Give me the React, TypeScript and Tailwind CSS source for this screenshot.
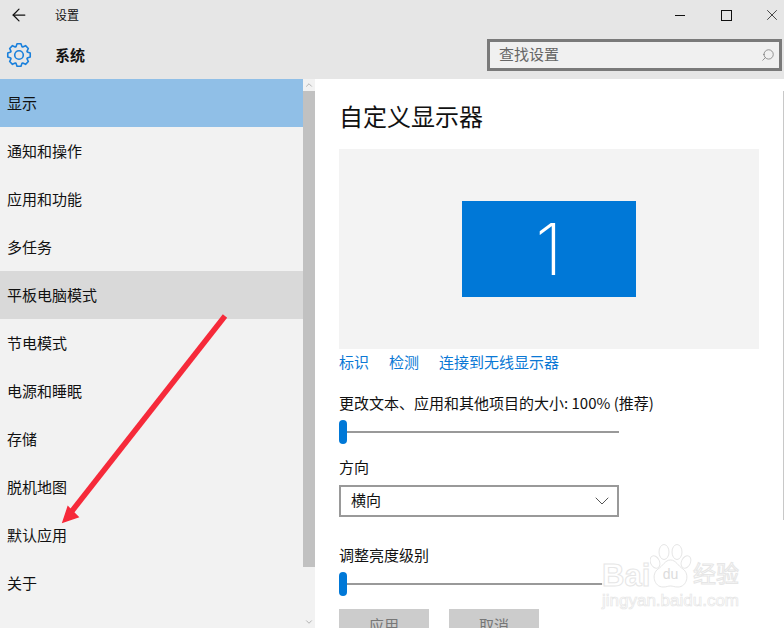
import { ArrowLeft, ChevronDown, ChevronUp, Search, X } from "lucide-react";

const menu = ["显示", "通知和操作", "应用和功能", "多任务", "平板电脑模式", "节电模式", "电源和睡眠", "存储", "脱机地图", "默认应用", "关于"];

// 8 tooth gear outline, centre 13,13
const gearPath =
  Array.from({ length: 8 }, (_, i) => {
    const a = (i * 45 * Math.PI) / 180;
    const pt = (r: number, d: number) => {
      const t = a + (d * Math.PI) / 180;
      return `${(13 + r * Math.cos(t)).toFixed(2)} ${(13 + r * Math.sin(t)).toFixed(2)}`;
    };
    return `${i === 0 ? "M" : "L"}${pt(8.8, -20)} L${pt(11.4, -10)} L${pt(11.4, 10)} L${pt(8.8, 20)}`;
  }).join(" ") + " Z";

function Slider({ className }: { className: string }) {
  return (
    <div className={`relative w-[280px] h-6 flex items-center ${className}`}>
      <div className="w-full h-[2px] bg-[#999999]" />
      <div className="absolute left-0 top-0 w-2 h-6 rounded-full bg-[#0078d7]" />
    </div>
  );
}

export default function App() {
  return (
    <div className="relative w-[784px] h-[628px] overflow-hidden bg-white text-[15px] text-[#111111] font-['Noto_Sans_CJK_SC','Liberation_Sans',sans-serif]">
      {/* title bar */}
      <header className="h-[79px] bg-[#e6e6e6]">
        <div className="h-[30px] flex items-center">
          <ArrowLeft className="w-[20px] h-[20px] ml-[9px]" strokeWidth={1.5} />
          <span className="ml-[26px] text-xs">设置</span>
          <div className="ml-auto flex items-center">
            <div className="w-[10px] h-px bg-[#111111]" />
            <div className="ml-[36px] w-[11px] h-[11px] border border-[#111111]" />
            <X className="ml-[31px] mr-[3px] w-[18px] h-[18px]" strokeWidth={1} />
          </div>
        </div>
        <div className="flex items-start h-[49px]">
          <svg className="ml-[6px] mt-[12px]" width="26" height="26" viewBox="0 0 26 26" fill="none" stroke="#1a80dc" strokeWidth="1.6" strokeLinejoin="round">
            <path d={gearPath} />
            <circle cx="13" cy="13" r="4.3" />
          </svg>
          <span className="ml-[23px] mt-[14px] leading-[22px] font-bold">系统</span>
          <div className="ml-auto mr-[2px] mt-[9px] w-[295px] h-[32px] border-[3px] border-[#7a7a7a] bg-[#f0f0f0] flex items-center justify-between pl-[9px] pr-[4px]">
            <span className="text-[#666666] pb-[2px]">查找设置</span>
            <Search className="w-[14px] h-[14px] text-[#777777] -scale-x-100" strokeWidth={1.3} />
          </div>
        </div>
      </header>

      <div className="flex h-[549px]">
        {/* sidebar */}
        <nav className="w-[303px] bg-[#f2f2f2]">
          {menu.map((item, i) => (
            <div
              key={item}
              className={`h-[48px] flex items-center pl-[7px] ${i === 0 ? "bg-[#90bfe7]" : i === 4 ? "bg-[#d9d9d9]" : ""}`}
            >
              {item}
            </div>
          ))}
        </nav>

        {/* sidebar scrollbar */}
        <div className="w-[12px] bg-[#f2f2f2] flex flex-col">
          <div className="h-[12px] flex items-center justify-center">
            <ChevronUp className="w-[10px] h-[10px] text-[#a6a6a6]" strokeWidth={2} />
          </div>
          <div className="h-[476px] bg-[#c1c1c1]" />
          <div className="mt-auto h-[12px] flex items-center justify-center">
            <ChevronDown className="w-[10px] h-[10px] text-[#a6a6a6]" strokeWidth={2} />
          </div>
        </div>

        {/* content */}
        <main className="flex-1 pl-[24px]">
          <h1 className="mt-[17px] h-[40px] flex items-center text-[24px] leading-none font-normal">自定义显示器</h1>
          <div className="mt-[13px] w-[420px] h-[200px] bg-[#f3f3f3] flex items-center justify-center">
            <div className="w-[174px] h-[96px] bg-[#0078d7] flex items-center justify-center text-white text-[72px] font-extralight leading-none font-['Inter',sans-serif]">
              1
            </div>
          </div>
          <div className="mt-[2px] h-[22px] flex items-center gap-[20px] text-[#0a78d5]">
            <span>标识</span>
            <span>检测</span>
            <span>连接到无线显示器</span>
          </div>
          <div className="mt-[19px] h-[22px] flex items-center">更改文本、应用和其他项目的大小: 100% (推荐)</div>
          <Slider className="mt-[6px]" />
          <div className="mt-[12px] h-[22px] flex items-center">方向</div>
          <div className="mt-[7px] w-[280px] h-[32px] border-2 border-[#999999] flex items-center justify-between pl-[10px] pr-[3px]">
            <span className="pb-[2px]">横向</span>
            <ChevronDown className="w-[24px] h-[24px] text-[#555555]" strokeWidth={1} />
          </div>
          <div className="mt-[27px] h-[22px] flex items-center">调整亮度级别</div>
          <Slider className="mt-[6px]" />
          <div className="mt-[13px] flex gap-[20px]">
            <div className="w-[90px] h-[32px] bg-[#cccccc] text-[#777777] flex items-center justify-center">应用</div>
            <div className="w-[90px] h-[32px] bg-[#cccccc] text-[#777777] flex items-center justify-center">取消</div>
          </div>
        </main>

        {/* content scrollbar edge */}
        <div className="w-px h-[429px] mt-[12px] bg-[#c8c8c8]" />
      </div>

      {/* red annotation arrow */}
      <svg className="absolute left-0 top-0 pointer-events-none" width="784" height="628" viewBox="0 0 784 628">
        <line x1="225" y1="316" x2="72" y2="511" stroke="#f62a3a" strokeWidth="5.5" />
        <polygon points="63,522 68,507 78,517" fill="#f62a3a" stroke="#f62a3a" strokeWidth="1.5" />
      </svg>

      {/* watermark */}
      <div className="absolute left-[602px] top-[543px] w-[140px] h-[66px] pointer-events-none">
        <div className="absolute left-0 top-[14px] w-[140px] h-[32px] bg-white/90" />
        <span className="absolute left-0 top-[17px] text-[31px] leading-none font-bold text-white [-webkit-text-stroke:1px_#e6e6e6] font-['Liberation_Sans',sans-serif]">Bai</span>
        <svg className="absolute left-[48px] top-0" width="42" height="46" viewBox="0 0 42 46" fill="#ffffff" stroke="#e6e6e6" strokeWidth="1">
          <ellipse cx="14" cy="9" rx="5" ry="7.5" />
          <ellipse cx="27" cy="9" rx="5" ry="7.5" />
          <ellipse cx="5" cy="19" rx="4.5" ry="6.5" transform="rotate(-25 5 19)" />
          <ellipse cx="36" cy="19" rx="4.5" ry="6.5" transform="rotate(25 36 19)" />
          <path d="M20.5 17 C26 17 28 23 33 26 C40 31 37 44 28 44 C24 44 23 43 20.5 43 C18 43 17 44 13 44 C4 44 1 31 8 26 C13 23 15 17 20.5 17 Z" />
          <text x="20.5" y="36" textAnchor="middle" fontSize="14" fontFamily="Liberation Sans" stroke="none" fill="#dcdcdc">du</text>
        </svg>
        <span className="absolute left-[91px] top-[18px] text-[23px] leading-none text-white [-webkit-text-stroke:1px_#e6e6e6]">经验</span>
        <span className="absolute left-0 top-[49px] text-[17px] leading-none text-white [-webkit-text-stroke:0.7px_#e6e6e6] font-['Liberation_Sans',sans-serif]">jingyan.baidu.com</span>
      </div>
    </div>
  );
}
